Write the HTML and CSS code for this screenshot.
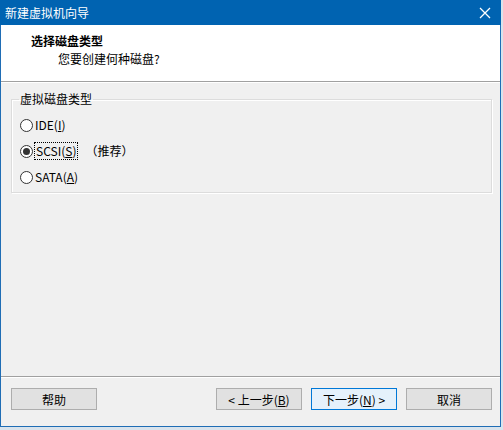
FILE: index.html
```html
<!DOCTYPE html>
<html lang="zh-CN">
<head>
    <meta charset="UTF-8">
    <title>新建虚拟机向导</title>
    <link rel="stylesheet" href="styles.css">
</head>
<body>
    <div class="window">
        <div class="titlebar">
            <span class="title">新建虚拟机向导</span>
            <svg class="close" width="12" height="12" viewBox="0 0 12 12">
                <path d="M1 1 L11 11 M11 1 L1 11" stroke="#fff" stroke-width="1.3"/>
            </svg>
        </div>
        <div class="header">
            <div class="header-title">选择磁盘类型</div>
            <div class="header-sub">您要创建何种磁盘?</div>
        </div>
        <div class="content">
            <fieldset class="group">
                <legend>虚拟磁盘类型</legend>
                <label class="radio"><span class="dot"></span>IDE(<u>I</u>)</label>
                <label class="radio checked"><span class="dot"></span><span class="focus">SCSI(<u>S</u>)</span><span class="note">（推荐）</span></label>
                <label class="radio"><span class="dot"></span>SATA(<u>A</u>)</label>
            </fieldset>
        </div>
        <div class="footer">
            <button class="btn">帮助</button>
            <div class="spacer"></div>
            <button class="btn">&lt; 上一步(<u>B</u>)</button>
            <button class="btn btn-default">下一步(<u>N</u>) &gt;</button>
            <button class="btn">取消</button>
        </div>
    </div>
</body>
</html>
```

FILE: styles.css
```css
body {
    margin: 0;
    padding: 0;
    width: 503px;
    height: 430px;
    background-color: #d9e3ec;
    font-family: "Noto Sans CJK SC", "Liberation Sans", sans-serif;
    font-size: 12px;
    color: #000;
    overflow: hidden;
}
.window {
    width: 499px;
    height: 426px;
    border: 1px solid #1f6db5;
    border-top: none;
    background-color: #f0f0f0;
    display: flex;
    flex-direction: column;
}
.titlebar {
    height: 25px;
    background-color: #0063b1;
    color: white;
    display: flex;
    align-items: center;
    justify-content: space-between;
    padding: 0 10px 0 5px;
    margin: 0 -1px;
}
.title {
    font-size: 12px;
    line-height: 25px;
}
.header {
    height: 56px;
    background-color: white;
    border-bottom: 1px solid #a0a0a0;
    box-shadow: 0 1px 0 #ffffff;
    padding: 0 0 0 30px;
}
.header-title {
    font-weight: bold;
    margin-top: 7px;
    line-height: 18px;
}
.header-sub {
    padding-left: 27px;
    line-height: 18px;
}
.content {
    flex: 1;
    padding: 9px 10px 0 10px;
    border-bottom: 1px solid #a0a0a0;
}
.group {
    margin: 0;
    padding: 5px 8px 2px 8px;
    border: 1px solid #dcdcdc;
    box-shadow: inset 1px 1px 0 #ffffff, 1px 1px 0 #ffffff;
    width: 463px;
}
.group legend {
    padding: 0 1px;
    margin-left: -1px;
    line-height: 16px;
}
.radio {
    display: flex;
    align-items: center;
    height: 26px;
    line-height: 16px;
}
.dot {
    width: 11px;
    height: 11px;
    border: 1px solid #333;
    border-radius: 50%;
    background: #fff;
    margin-right: 2px;
    position: relative;
}
.radio.checked .dot::after {
    content: "";
    position: absolute;
    left: 2px;
    top: 2px;
    width: 7px;
    height: 7px;
    border-radius: 50%;
    background: #333;
}
.focus {
    outline: 1px dotted #000;
    outline-offset: 0;
    padding: 0 1px;
}
.note {
    margin-left: 8px;
}
.footer {
    height: 38px;
    display: flex;
    align-items: flex-start;
    padding: 10px 8px 0 10px;
    gap: 9px;
    border-top: 1px solid #ffffff;
}
.spacer {
    flex: 1;
}
.btn {
    width: 86px;
    height: 22px;
    border: 1px solid #adadad;
    background-color: #e1e1e1;
    font-family: inherit;
    font-size: 12px;
    color: #000;
    padding: 0;
}
.btn-default {
    border-color: #0078d7;
    background-color: #e5f1fb;
}
```
